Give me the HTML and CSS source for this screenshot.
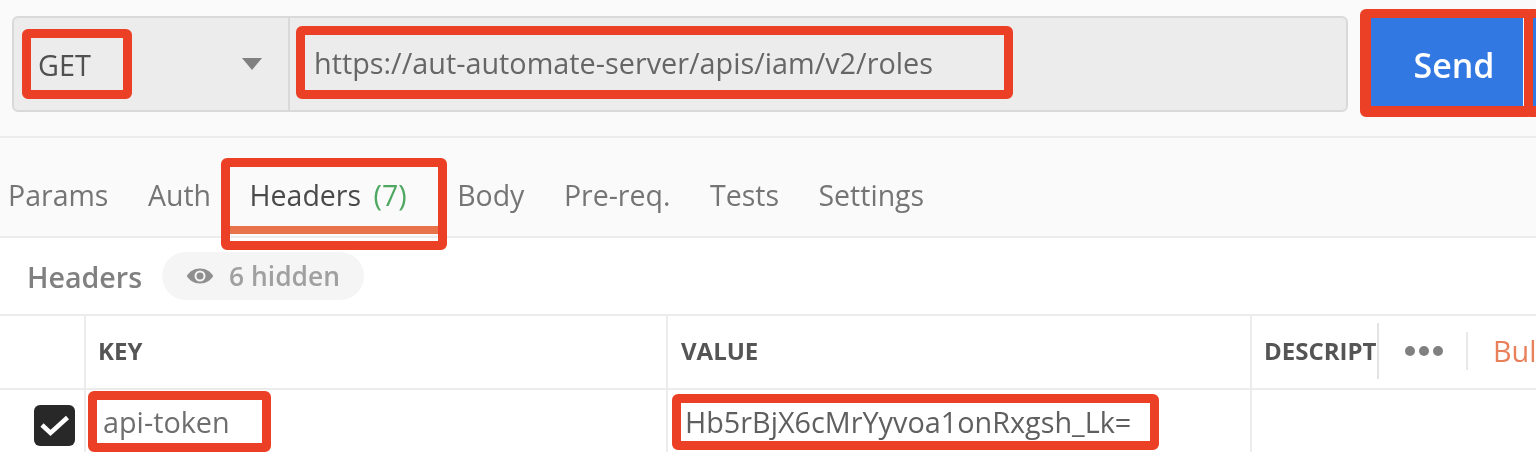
FILE: index.html
```html
<!DOCTYPE html>
<html lang="en">
<head>
<meta charset="utf-8">
<title>Request</title>
<link rel="stylesheet" href="styles.css">
</head>
<body>
<div class="page">
  <section class="request-bar">
    <div class="request-box">
      <div class="method"><span>GET</span><i class="caret"></i></div>
      <div class="url">https://aut-automate-server/apis/iam/v2/roles</div>
    </div>
    <button class="send">Send</button>
    <div class="send-more"></div>
  </section>
  <nav class="tabs">
    <span class="tab">Params</span>
    <span class="tab">Auth</span>
    <span class="tab active">Headers <em>(7)</em></span>
    <span class="tab">Body</span>
    <span class="tab">Pre-req.</span>
    <span class="tab">Tests</span>
    <span class="tab">Settings</span>
  </nav>
  <div class="headers-row">
    <span class="headers-title">Headers</span>
    <span class="pill">
      <svg width="28" height="18" viewBox="0 0 28 18"><path d="M14 1.5C8 1.5 3 5 .8 9 3 13 8 16.500 14 16.500S25 13 27.200 9C25 5 20 1.500 14 1.500Z" fill="#8f8f8f"/><circle cx="14" cy="9" r="5.500" fill="#f5f5f5"/><circle cx="14" cy="9" r="3.500" fill="#8f8f8f"/></svg>
      6 hidden
    </span>
  </div>
  <div class="table">
    <div class="thead">
      <div class="cell check-col"></div>
      <div class="cell key-col">KEY</div>
      <div class="cell value-col">VALUE</div>
      <div class="cell desc-col">
        <span class="desc-label">DESCRIPT</span>
        <span class="dots"><i></i><i></i><i></i></span>
        <span class="bulk">Bulk Edit</span>
      </div>
    </div>
    <div class="tbody">
      <div class="cell check-col"><span class="checkbox"><svg width="30" height="24" viewBox="0 0 30 24"><path d="M2 12 10.500 20 27.500 4.500" fill="none" stroke="#fff" stroke-width="4.500"/></svg></span></div>
      <div class="cell key-col body-text">api-token</div>
      <div class="cell value-col body-text">Hb5rBjX6cMrYyvoa1onRxgsh_Lk=</div>
      <div class="cell desc-col"></div>
    </div>
  </div>
  <div class="mark mark-get"></div>
  <div class="mark mark-url"></div>
  <div class="mark mark-send"></div>
  <div class="mark mark-send-next"></div>
  <div class="mark mark-tab"></div>
  <div class="mark mark-key"></div>
  <div class="mark mark-value"></div>
</div>
</body>
</html>
```
FILE: styles.css
```css
* { box-sizing: border-box; }
html, body { margin: 0; padding: 0; }
body { background: #fff; font-family: "Open Sans", "Liberation Sans", sans-serif; color: #505050; }
.page { position: relative; width: 1536px; height: 452px; overflow: hidden; filter: blur(.6px); }

.request-bar { height: 138px; background: #fafafa; border-bottom: 2px solid #ececec; display: flex; align-items: flex-start; padding: 16px 0 0 12px; }
.request-box { width: 1336px; flex: none; height: 96px; display: flex; background: #ececec; border: 2px solid #d9d9d9; border-radius: 6px; }
.method { width: 276px; flex: none; display: flex; align-items: center; justify-content: space-between; padding: 0 26px 0 24px; border-right: 2px solid #d9d9d9; font-size: 28.8px; color: #505050; }
.caret { width: 0; height: 0; border-left: 10px solid transparent; border-right: 10px solid transparent; border-top: 12px solid #808080; }
.url { flex: 1; display: flex; align-items: center; padding: 0 0 3px 24px; font-size: 28.8px; color: #666; }
.send { width: 152px; flex: none; height: 88px; margin-left: 23px; margin-top: 2px; border: 0; padding: 5px 0 0 14px; background: #3178e3; color: #fff; font: 600 34px "Open Sans", sans-serif; }
.send-more { width: 10px; flex: none; height: 88px; margin-left: 9px; margin-top: 2px; background: #3178e3; }

.tabs { height: 100px; background: #fafafa; border-bottom: 2px solid #ececec; display: flex; align-items: flex-start; padding: 37px 0 0 8px; gap: 39.5px; font-size: 28.5px; line-height: 40px; color: #757575; }
.tab { position: relative; }
.tab.active { color: #4a4a4a; margin-left: -1px; margin-right: 11px; }
.tab.active em { font-style: normal; color: #4fa862; margin-left: 5px; }
.tab.active::after { content: ""; position: absolute; left: -20px; right: -31px; top: 51px; height: 8px; background: #e8734a; }

.headers-row { height: 78px; display: flex; align-items: center; padding-left: 27px; gap: 20px; border-bottom: 2px solid #ececec; }
.headers-title { font-size: 28.6px; font-weight: 600; color: #808080; }
.pill { display: flex; align-items: center; gap: 15px; height: 48px; padding: 0 24px; border-radius: 24px; background: #f5f5f5; font-size: 26.4px; font-weight: 600; color: #a0a0a0; }

.table { display: flex; flex-direction: column; }
.thead, .tbody { display: grid; grid-template-columns: 86px 582px 584px 1fr; }
.thead { height: 74px; border-bottom: 2px solid #ececec; font-size: 24px; font-weight: 700; color: #555; }
.thead .cell { padding-bottom: 3px; }
.tbody { height: 62px; }
.cell { display: flex; align-items: center; padding-left: 12px; border-right: 2px solid #ececec; white-space: nowrap; overflow: hidden; }
.value-col { padding-left: 13px; }
.check-col { padding-left: 34px; }
.desc-col { border-right: 0; padding-left: 12px; }
.desc-label { width: 115px; overflow: hidden; flex: none; height: 56px; line-height: 56px; border-right: 2px solid #e4e4e4; }
.dots { display: flex; gap: 4px; margin-left: 26px; flex: none; padding-right: 23px; border-right: 2px solid #e8e8e8; height: 38px; align-items: center; }
.dots i { width: 10px; height: 10px; border-radius: 50%; background: #808080; }
.bulk { margin-left: 25px; font-size: 28.8px; font-weight: 400; color: #e8805a; }
.body-text { font-size: 28.8px; color: #6e6e6e; padding-left: 17px; }
.value-col.body-text { color: #5f5f5f; }
.checkbox { width: 41px; height: 41px; border-radius: 6px; background: #282828; display: flex; align-items: center; justify-content: center; margin-top: 8px; }

.mark { position: absolute; border: 9px solid #ec4026; border-radius: 6px; }
.mark-get { left: 22px; top: 29px; width: 110px; height: 70px; }
.mark-url { left: 296px; top: 26px; width: 717px; height: 73px; }
.mark-send { left: 1360px; top: 9px; width: 173px; height: 108px; border-left-width: 11px; border-bottom-width: 11px; }
.mark-send-next { left: 1524px; top: 9px; width: 60px; height: 108px; border-bottom-width: 11px; }
.mark-tab { left: 221px; top: 158px; width: 226px; height: 92px; }
.mark-key { left: 88px; top: 391px; width: 183px; height: 61px; }
.mark-value { left: 672px; top: 394px; width: 487px; height: 56px; }
```
